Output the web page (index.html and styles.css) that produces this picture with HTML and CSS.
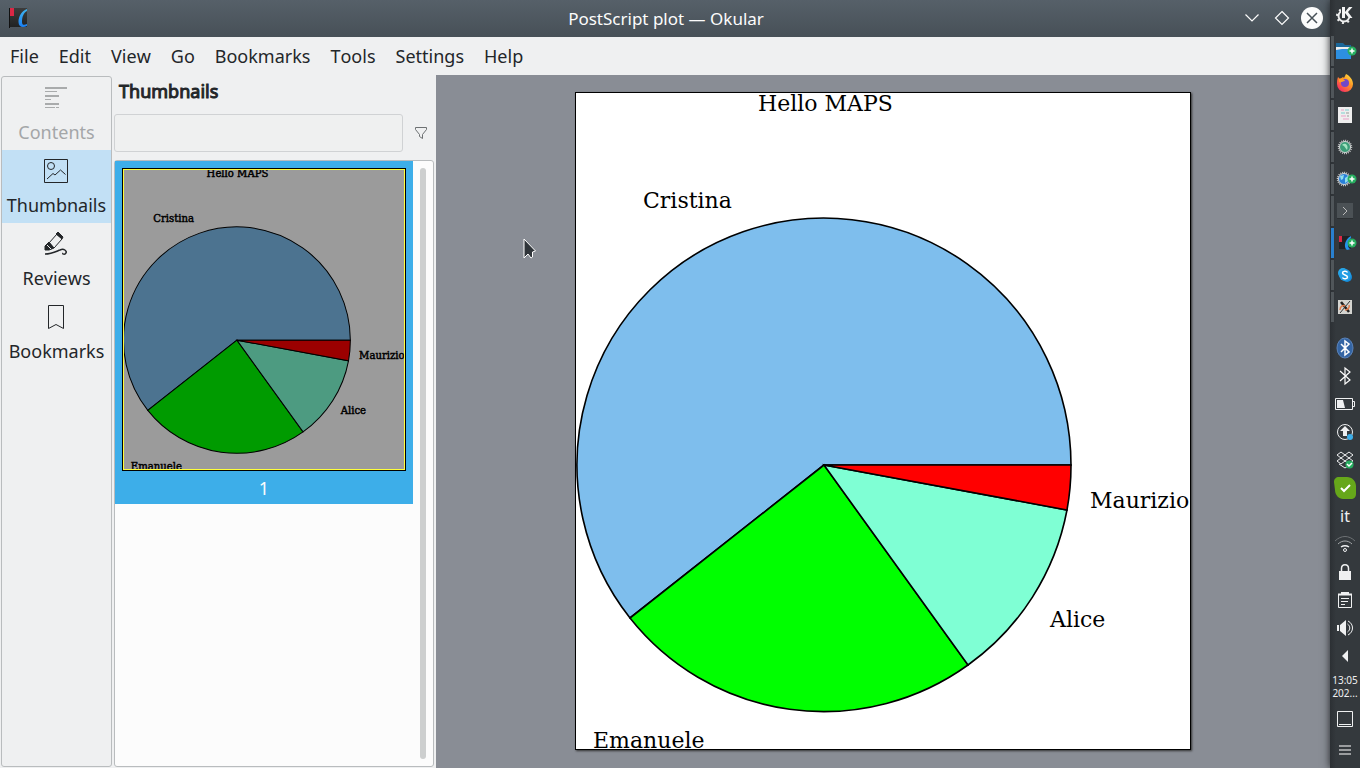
FILE: index.html
```html
<!DOCTYPE html>
<html lang="en">
<head>
<meta charset="utf-8">
<title>PostScript plot — Okular</title>
<link rel="stylesheet" href="styles.css">
</head>
<body>
<main class="window">
  <header class="titlebar">
    <svg class="app-icon" viewBox="0 0 20 20" width="20" height="20">
      <defs>
        <linearGradient id="book" x2="0" y2="1"><stop stop-color="#3c3c3c"/><stop offset="1" stop-color="#202223"/></linearGradient>
        <linearGradient id="curve" x2="0" y2="1"><stop stop-color="#3fb5ee"/><stop offset="1" stop-color="#1b7ff2"/></linearGradient>
      </defs>
      <path d="M0 0h18v19H0z" fill="url(#book)"/><path d="M0 0h1v20H0z" fill="#111"/>
      <path d="M1 0h4v8H1z" fill="#da2745"/>
      <path d="M18 1C12 3 9.500 9 9.500 14c0 5 4 6 8.500 4v-2c-3 1.500-5 1-5-2 0-5 1.500-9 5-11z" fill="url(#curve)"/>
    </svg>
    <h1 class="title">PostScript plot — Okular</h1>
    <div class="window-buttons">
      <button class="window-button" aria-label="Minimize"><svg viewBox="0 0 22 22" width="22" height="22"><path d="M4.500 7.500l6.500 6.500 6.500-6.500" class="light-line"/></svg></button>
      <button class="window-button" aria-label="Maximize"><svg viewBox="0 0 22 22" width="22" height="22"><path d="M11 4.500l6.500 6.500-6.500 6.500L4.500 11z" class="light-line"/></svg></button>
      <button class="window-button" aria-label="Close"><svg viewBox="0 0 22 22" width="22" height="22"><circle cx="11" cy="11" r="11" fill="#fcfcfc"/><path d="M6 6l10 10M16 6L6 16" stroke="#475057" stroke-width="1.500"/></svg></button>
    </div>
  </header>

  <nav class="menubar">
    <button class="menu">File</button><button class="menu">Edit</button><button class="menu">View</button><button class="menu">Go</button><button class="menu">Bookmarks</button><button class="menu">Tools</button><button class="menu">Settings</button><button class="menu">Help</button>
  </nav>

  <div class="workspace">
    <nav class="sidebar">
      <button class="tab" disabled>
        <svg viewBox="0 0 24 24" width="24" height="24"><path d="M1 2h22M1 10h14M1 18h14" stroke="#a9abac" stroke-width="2"/><path d="M1 5.500h12M1 13.500h6M1 21.500h10M12 21.500h3" stroke="#a9abac"/></svg>
        <span>Contents</span>
      </button>
      <button class="tab selected">
        <svg viewBox="0 0 24 24" width="24" height="24" class="dark-line"><path d="M.5.500h23v23H.5z"/><circle cx="7" cy="7" r="3.500"/><path d="M3 20l6-5.500 2 1.500 5.500-5 5 4.500"/></svg>
        <span>Thumbnails</span>
      </button>
      <button class="tab">
        <svg viewBox="0 0 24 24" width="24" height="24" class="dark-line"><path d="M13 2l5 5-8 9-5-5z"/><path d="M12 2l2-2 5 5-1 2z" fill="#232629"/><path d="M5 10l-4 4v4h4l5-2z" fill="#232629"/><path d="M3 13l4 4M6 10l5 5" stroke="#eff0f1"/><path d="M1 22c7 0 12-3 15-4 4-2 7 1 6 3-1 2-4 1-3 0" stroke-width="1.500"/></svg>
        <span>Reviews</span>
      </button>
      <button class="tab">
        <svg viewBox="0 0 24 24" width="24" height="24" class="dark-line"><path d="M4.500.500h15v23L12 19.500l-7.500 4z"/></svg>
        <span>Bookmarks</span>
      </button>
    </nav>

    <aside class="thumbnails">
      <h2 class="pane-title">Thumbnails</h2>
      <div class="search-row">
        <input class="search" type="text" aria-label="Search thumbnails">
        <button class="filter" aria-label="Filter"><svg viewBox="0 0 12 12" width="12" height="12" fill="none" stroke="#6d7173"><path d="M.5.500h11v2L7.500 7.500v4l-3-2v-2L.5 2.500z"/></svg></button>
      </div>
      <div class="thumb-list">
        <button class="thumb">
          <svg class="plot plot-small" viewBox="0 0 614 656" preserveAspectRatio="none">
            <path class="cristina" d="M248 373L54 526A247 247 0 1 1 495 373z"/>
            <path class="emanuele" d="M248 373L392 573A247 247 0 0 1 54 526z"/>
            <path class="alice" d="M248 373L491 418A247 247 0 0 1 392 573z"/>
            <path class="maurizio" d="M248 373H495A247 247 0 0 1 491 418z"/>
            <text x="182" y="18">Hello MAPS</text><text x="66" y="115">Cristina</text><text x="514" y="415">Maurizio</text><text x="474" y="534">Alice</text><text x="17" y="655">Emanuele</text>
          </svg>
          <span>1</span>
        </button>
        <div class="scrollbar"></div>
      </div>
    </aside>

    <section class="canvas">
      <svg class="plot plot-page" viewBox="0 0 614 656">
        <path class="cristina" d="M248 372L54 525A247 247 0 1 1 495 372z"/>
        <path class="emanuele" d="M248 372L392 572A247 247 0 0 1 54 525z"/>
        <path class="alice" d="M248 372L491 417A247 247 0 0 1 392 572z"/>
        <path class="maurizio" d="M248 372H495A247 247 0 0 1 491 417z"/>
        <text x="182" y="18">Hello MAPS</text><text x="67" y="115">Cristina</text><text x="514" y="415">Maurizio</text><text x="474" y="534">Alice</text><text x="17" y="655">Emanuele</text>
      </svg>
      <svg class="pointer" viewBox="0 0 14 22" width="14" height="22"><path d="M1 1v19l4-4 3 4 1.500-1v-5l3-1z" fill="#30353a" stroke="#fff"/></svg>
    </section>
  </div>
</main>

<aside class="panel">
  <button class="launcher" aria-label="Applications"><svg viewBox="0 0 20 20" width="20" height="20"><circle cx="9" cy="11" r="5.500" fill="none" stroke="#eee" stroke-width="2"/><circle cx="9" cy="11" r="7" fill="none" stroke="#eee" stroke-width="2" stroke-dasharray="2 3.500"/><path d="M6 1h13v9l-1 5-4-3-3 1H6z" fill="#33383c"/><path d="M7 2h3v5l4-5h3.500L13 7l4.500 6H14l-4-5v5H7z" fill="#f4f4f4"/></svg></button>
  <div class="tasks">
    <button class="task" aria-label="Files"><svg viewBox="0 0 22 20" width="22" height="20"><path d="M1 2h7l2 2h6v5H1z" fill="#1b6799"/><path d="M1 6h15v3H1z" fill="#eee"/><path d="M1 9l6-1h9v10H1z" fill="#2d8fe0"/><circle cx="17" cy="10" r="4.500" fill="#27ae60"/><path d="M14.500 10h5M17 7.500v5" stroke="#fff" stroke-width="1.500"/></svg></button>
    <button class="task" aria-label="Firefox"><svg viewBox="0 0 20 20" width="20" height="20"><defs><linearGradient id="fox" x1="1" x2=".2" y2="1"><stop stop-color="#fff24a"/><stop offset=".45" stop-color="#ff9624"/><stop offset="1" stop-color="#f52568"/></linearGradient></defs><path d="M3 4l2 2 3-2 1 1 2-4c4 2 7 6 7 10a8 8 0 0 1-16 0c0-3 0-4 1-7z" fill="url(#fox)"/><circle cx="10" cy="10" r="4" fill="#7148c9"/><path d="M4 6c3-1 5 0 6 2-3 0-3 2-6 1z" fill="#ff9e25"/></svg></button>
    <button class="task" aria-label="Document"><svg viewBox="0 0 20 20" width="20" height="20"><path d="M3 2h14v16H3z" fill="#eee"/><path d="M6 5h3M6 11h5M8 14h6" stroke="#e9a0c8"/><path d="M10 5h4M6 8h4" stroke="#7dcfcf"/><path d="M11 8h3M12 11h2" stroke="#999"/></svg></button>
    <button class="task" aria-label="Settings"><svg viewBox="0 0 20 20" width="20" height="20"><circle cx="10" cy="10" r="6.500" fill="none" stroke="#c9cbcc" stroke-width="1.500" stroke-dasharray="1 1"/><circle cx="10" cy="10" r="5.500" fill="#3b9d78" stroke="#d5d7d7"/><path d="M7 8c3-3 7 0 5 5l-3-4z" fill="#a3e3c0"/></svg></button>
    <button class="task" aria-label="Network"><svg viewBox="0 0 22 20" width="22" height="20"><circle cx="9" cy="10" r="6.500" fill="none" stroke="#c9cbcc" stroke-width="1.500" stroke-dasharray="1 1"/><circle cx="9" cy="10" r="5.500" fill="#2980d9" stroke="#d5d7d7"/><path d="M5 7l4-1-1 4-2 1zM10 9l3-2v5l-3 2z" fill="#8fdeec"/><circle cx="17" cy="10" r="4.500" fill="#27ae60"/><path d="M14.500 10h5M17 7.500v5" stroke="#fff" stroke-width="1.500"/></svg></button>
    <button class="task" aria-label="Terminal"><svg viewBox="0 0 20 20" width="20" height="20"><path d="M2 2h16v16H2z" fill="#4b5155"/><path d="M2 17.500h16" stroke="#2b2f32"/><path d="M8 6l4 4-4 4" fill="none" stroke="#bbb"/></svg></button>
    <button class="task current" aria-label="Okular"><svg viewBox="0 0 22 20" width="22" height="20"><path d="M4 3h12v13H4z" fill="#202224"/><path d="M4 3h3v6H4z" fill="#da2745"/><path d="M16 3c-6 3-8 11-4 14l4-1c-4 0-4-7 0-11z" fill="#2492e8"/><circle cx="17" cy="10" r="4.500" fill="#27ae60"/><path d="M14.500 10h5M17 7.500v5" stroke="#fff" stroke-width="1.500"/></svg></button>
    <button class="task" aria-label="Skype"><svg viewBox="0 0 20 20" width="20" height="20"><circle cx="8" cy="8" r="5" fill="#28a8ea"/><circle cx="12" cy="12" r="5" fill="#168ad8"/><circle cx="10" cy="10" r="6" fill="#209de4"/><path d="M12.500 7.500c-1-2-5-1.500-5 .500s5 2 5 4-4 2.500-5 .500" fill="none" stroke="#fff" stroke-width="1.500"/></svg></button>
    <button class="task" aria-label="X application"><svg viewBox="0 0 20 20" width="20" height="20"><path d="M3 3h14v14H3z" fill="#d4d4d0"/><path d="M6 5l8 10" stroke="#222" stroke-width="2.500"/><path d="M15 4L5 16" stroke="#333"/><path d="M5 13c0-4 3-5 5-4M10 13c3 0 5-3 4-5" fill="none" stroke="#e07b4b" stroke-width="1.500"/></svg></button>
  </div>
  <div class="tray">
    <button class="status" aria-label="Bluetooth manager"><svg viewBox="0 0 22 22" width="22" height="22"><ellipse cx="11" cy="11" rx="8" ry="10" fill="#3465a4" stroke="#5a83bb"/><path d="M7 7l8 8-4 3V4l4 3-8 8" fill="none" stroke="#fff" stroke-width="1.500"/></svg></button>
    <button class="status" aria-label="Bluetooth"><svg viewBox="0 0 22 22" width="22" height="22" class="light-line"><path d="M6 6l10 9-5 4V3l5 4-10 9"/></svg></button>
    <button class="status" aria-label="Battery"><svg viewBox="0 0 22 22" width="22" height="22"><path d="M1.500 5.500h17v11h-17zM18.500 8.500h2v5h-2" fill="none" stroke="#eff0f1"/><path d="M3 7h6l2 8H3z" fill="#eff0f1"/></svg></button>
    <button class="status" aria-label="Updates"><svg viewBox="0 0 22 22" width="22" height="22"><circle cx="11" cy="11" r="7.500" fill="none" stroke="#eff0f1"/><path d="M11 5l5 5h-3v5H9v-5H6z" fill="#eff0f1"/><circle cx="16" cy="16" r="3" fill="#3daee9"/></svg></button>
    <button class="status" aria-label="Dropbox"><svg viewBox="0 0 22 22" width="22" height="22"><path d="M7 3l4 3-4 3-4-3zM15 3l4 3-4 3-4-3zM7 9l4 3-4 3-4-3zM15 9l4 3-4 3-4-3zM5 15l6 4 6-4" fill="none" stroke="#eff0f1"/><circle cx="15.500" cy="15.500" r="4" fill="#27ae60"/><path d="M13 15l2 2 3-3" fill="none" stroke="#fff" stroke-width="1.500"/></svg></button>
    <button class="status" aria-label="Security"><svg viewBox="0 0 22 22" width="22" height="22"><path d="M5 0h8c5 0 9 4 9 9v8c0 3-2 5-5 5H9c-4 0-8-4-8-9L0 5c0-3 2-5 5-5z" fill="#66a71a"/><path d="M7 11l3 3 6-6" fill="none" stroke="#fff" stroke-width="2"/></svg></button>
    <button class="status language">it</button>
    <button class="status" aria-label="Wi-Fi"><svg viewBox="0 0 22 22" width="22" height="22" fill="none"><path d="M1 8c6-6 14-6 20 0" stroke="#6d7174"/><path d="M4 11c4-4 10-4 14 0" stroke="#a6a9ab"/><path d="M7 14c3-2 5-2 8 0" stroke="#eff0f1" stroke-width="1.500"/><circle cx="11" cy="17" r="1.500" stroke="#eff0f1"/></svg></button>
    <button class="status" aria-label="Lock"><svg viewBox="0 0 22 22" width="22" height="22"><path d="M5 10h12v9H5z" fill="#eff0f1"/><path d="M7.500 10V7.500c0-5 7-5 7 0V10" fill="none" stroke="#eff0f1" stroke-width="1.500"/></svg></button>
    <button class="status" aria-label="Clipboard"><svg viewBox="0 0 22 22" width="22" height="22" fill="none" stroke="#eff0f1"><path d="M4.500 5.500h13v13h-13zM7 9.500h8M7 12.500h7M7 15.500h4"/><path d="M4 5.500h14" stroke-width="2"/><path d="M7 4h8" stroke-width="2"/></svg></button>
    <button class="status" aria-label="Volume"><svg viewBox="0 0 22 22" width="22" height="22"><path d="M3 8h2v6H3zM6 8l6-5v16l-6-5z" fill="#eff0f1"/><path d="M13.500 7c3 2 3 6 0 8M14 4c6 3 6 11 0 14" fill="none" stroke="#eff0f1"/></svg></button>
    <button class="status" aria-label="Show hidden icons"><svg viewBox="0 0 22 22" width="22" height="22"><path d="M14 5v12l-6-6z" fill="#eff0f1"/></svg></button>
  </div>
  <time class="clock"><span>13:05</span><span>202...</span></time>
  <button class="corner" aria-label="Show desktop"><svg viewBox="0 0 16 16" width="16" height="16" fill="none" stroke="#eff0f1"><path d="M.5.500h15v15H.5zM2 13.500h12"/></svg></button>
  <button class="corner" aria-label="Panel options"><svg viewBox="0 0 16 16" width="16" height="16"><path d="M2 4h12M2 8h12M2 12h12" stroke="#9b9d9f" stroke-width="2"/></svg></button>
</aside>
</body>
</html>
```
FILE: styles.css
```css
* { box-sizing: border-box; }
body { margin: 0; height: 100vh; display: flex; font: 18px/24px "Noto Sans", sans-serif; font-kerning: none; color: #232629; background: #eff0f1; overflow: hidden; }
button { margin: 0; padding: 0; border: 0; background: none; font: inherit; font-kerning: none; color: inherit; }
svg { display: block; flex: none; }
h1, h2 { margin: 0; font-weight: 400; }
.light-line { fill: none; stroke: #fcfcfc; stroke-width: 1.2; }
.dark-line { fill: none; stroke: #232629; }

.window { flex: 1; min-width: 0; display: flex; flex-direction: column; }
.titlebar { height: 37px; flex: none; display: grid; grid-template-columns: 1fr auto 1fr; align-items: center; padding: 0 7px 0 9px; background: linear-gradient(#566069, #475057); color: #fcfcfc; }
.app-icon { margin-bottom: 2px; }
.title { font-size: 17px; line-height: 24px; font-kerning: auto; }
.window-buttons { display: flex; justify-content: flex-end; gap: 8px; padding-bottom: 1px; }
.menubar { height: 38px; flex: none; display: flex; align-items: center; }
.menu { padding: 0 10px; }
.workspace { flex: 1; min-height: 0; display: flex; }

.sidebar { width: 111px; flex: none; margin: 1px 0 1px 1px; border: 1px solid #b9bcbe; border-radius: 3px; }
.tab { width: 100%; height: 73px; display: flex; flex-direction: column; align-items: center; gap: 10px; padding-top: 9px; }
.tab svg { margin-right: 1px; }
.tab:disabled { color: #a4a6a8; }
.tab.selected { background: #c2e0f5; }

.thumbnails { width: 324px; flex: none; display: flex; flex-direction: column; padding: 4px 2px 1px; }
.pane-title { font-size: 18px; line-height: 24px; padding-left: 5px; -webkit-text-stroke: 1px currentColor; }
.search-row { display: flex; align-items: center; gap: 12px; margin: 11px 0 8px; padding-right: 7px; }
.search { flex: 1; min-width: 0; height: 38px; border: 1px solid #d0d2d4; border-radius: 3px; background: #eff0f0; font: inherit; padding: 0 8px; }
.thumb-list { flex: 1; min-height: 0; display: flex; align-items: flex-start; border: 1px solid #b9bcbe; border-radius: 3px; background: #fcfcfc; }
.thumb { width: 298px; display: flex; flex-direction: column; align-items: center; gap: 5px; padding: 7px 7px 4px; background: #3daee9; color: #fcfcfc; }
.scrollbar { width: 6px; align-self: stretch; margin: 7px; border-radius: 3px; background: #cdcfcf; }

.plot { background: var(--paper); border: 1px solid #000; stroke: #000; overflow: visible; }
.plot text { font: 22px "DejaVu Serif", serif; fill: #000; stroke: none; }
.plot .cristina { fill: var(--sky); }
.plot .emanuele { fill: var(--green); }
.plot .alice { fill: var(--aqua); }
.plot .maurizio { fill: var(--red); }
.plot-page { --paper: #fff; --sky: #7ebeed; --green: #0f0; --aqua: #7fffd4; --red: #f00; height: 100%; stroke-width: 1.6; box-shadow: 1px 1px 2px #333; }
.plot-small { --paper: #9b9b9b; --sky: #4c7390; --green: #009b00; --aqua: #4d9b81; --red: #9b0000; width: 100%; height: 303px; stroke-width: 2.2; outline: 1px solid #ffff3c; outline-offset: -2px; }
.plot-small text { stroke: #000; stroke-width: 1; }

.canvas { flex: 1; min-width: 0; position: relative; display: flex; justify-content: center; padding: 17px 0 18px; background: #898d95; }
.pointer { position: absolute; left: 87px; top: 163px; }

.panel { width: 30px; flex: none; display: flex; flex-direction: column; background: linear-gradient(90deg, #2c3034, #34393d 6px); color: #eff0f1; box-shadow: 0 0 8px #202326; position: relative; }
.launcher { height: 30px; display: grid; place-items: center; margin-bottom: 5px; }
.tasks { display: flex; flex-direction: column; gap: 2px; padding-top: 1px; }
.task { height: 30px; margin-left: 1px; padding-left: 1px; border-left: 3px solid #50565a; display: flex; align-items: center; }
.task.current { border-color: #2980cf; }
.tray { padding-top: 12px; }
.status { width: 100%; height: 28px; display: grid; place-items: center; }
.language { font-size: 16px; line-height: 24px; }
.clock { height: 33px; display: flex; flex-direction: column; align-items: center; justify-content: center; font-size: 10px; line-height: 13px; }
.corner { height: 31px; display: grid; place-items: center; }
```
